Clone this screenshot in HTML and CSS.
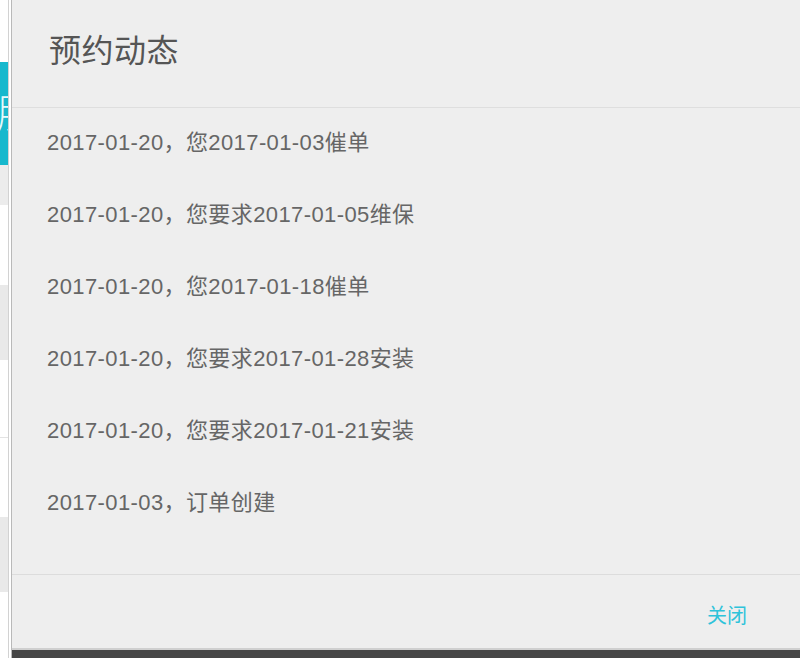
FILE: index.html
```html
<!DOCTYPE html>
<html lang="zh-CN">
<head>
<meta charset="utf-8">
<title>预约动态</title>
<link rel="stylesheet" href="styles.css">
</head>
<body>
  <div class="page">
    <div class="page-col">
      <div class="blk blk-white blk-top"></div>
      <div class="blk blk-cyan"><span class="cyan-text">日期</span></div>
      <div class="blk blk-light blk-a"></div>
      <div class="blk blk-white blk-b"></div>
      <div class="blk blk-gray blk-c"></div>
      <div class="blk blk-white blk-d"></div>
      <div class="blk blk-white blk-e"></div>
      <div class="blk blk-gray blk-f"></div>
      <div class="blk blk-white blk-g"></div>
    </div>
    <div class="page-line"></div>
  </div>

  <div class="modal">
    <div class="modal-header">
      <h2 class="modal-title">预约动态</h2>
    </div>
    <ul class="modal-list">
      <li class="modal-item">2017-01-20，您2017-01-03催单</li>
      <li class="modal-item">2017-01-20，您要求2017-01-05维保</li>
      <li class="modal-item">2017-01-20，您2017-01-18催单</li>
      <li class="modal-item">2017-01-20，您要求2017-01-28安装</li>
      <li class="modal-item">2017-01-20，您要求2017-01-21安装</li>
      <li class="modal-item">2017-01-03，订单创建</li>
    </ul>
    <div class="modal-footer">
      <a class="btn-close" href="#">关闭</a>
    </div>
    <div class="modal-edge"></div>
    <div class="modal-bar"></div>
  </div>
</body>
</html>
```

FILE: styles.css
```css
html, body {
  margin: 0;
  padding: 0;
}

body {
  width: 800px;
  height: 658px;
  overflow: hidden;
  position: relative;
  background: #ffffff;
  font-family: "Liberation Sans", "Noto Sans CJK SC", sans-serif;
}

.page {
  display: flex;
  height: 658px;
}

.page-col {
  width: 8px;
  display: flex;
  flex-direction: column;
}

.page-line {
  width: 1px;
  background: #d2d2d2;
}

.blk {
  flex: none;
}

.blk-white { background: #ffffff; }
.blk-light { background: #ececec; }
.blk-gray { background: #e9e9e9; }

.blk-top { height: 62px; }

.blk-cyan {
  height: 103px;
  background: #17b8cd;
  display: flex;
  justify-content: flex-end;
  overflow: hidden;
  align-items: flex-start;
}

.cyan-text {
  flex: none;
  color: #e6f8fb;
  font-size: 40px;
  line-height: 40px;
  margin-top: 29px;
  margin-right: -10px;
  white-space: nowrap;
  font-family: "Noto Sans CJK SC", sans-serif;
  font-weight: 300;
}

.blk-a { height: 40px; }
.blk-b { height: 80px; }
.blk-c { height: 75px; }
.blk-d { height: 77px; border-bottom: 1px solid #e3e3e3; }
.blk-e { height: 79px; }
.blk-f { height: 75px; }
.blk-g { flex: 1; }

.modal {
  position: absolute;
  left: 11px;
  top: 0;
  right: 0;
  bottom: 0;
  display: flex;
  flex-direction: column;
  background: #eeeeee;
  border-left: 1px solid #b9b9b9;
}

.modal-header {
  height: 108px;
  box-sizing: border-box;
  border-bottom: 1px solid #dedede;
  padding: 31px 0 0 37px;
}

.modal-title {
  margin: 0;
  font-size: 32px;
  line-height: 40px;
  font-weight: normal;
  color: #555555;
  letter-spacing: 0.5px;
}

.modal-list {
  list-style: none;
  margin: 0;
  padding: 0 0 34px 0;
}

.modal-item {
  height: 72px;
  box-sizing: border-box;
  padding: 20px 0 0 35px;
  font-size: 22px;
  line-height: 30px;
  color: #666666;
  white-space: nowrap;
  letter-spacing: 0.4px;
}

.modal-footer {
  flex: 1;
  border-top: 1px solid #dcdcdc;
  display: flex;
  justify-content: flex-end;
  align-items: flex-start;
  padding: 29px 53px 0 0;
}

.btn-close {
  font-size: 20px;
  line-height: 24px;
  color: #2ec3da;
  text-decoration: none;
}

.modal-edge {
  height: 2px;
  background: #cfcfcf;
}

.modal-bar {
  height: 8px;
  background: #464646;
}
```
